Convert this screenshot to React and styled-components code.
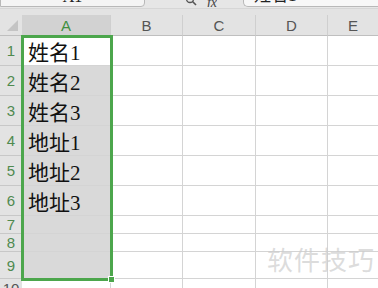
import styled, { createGlobalStyle } from 'styled-components';

const GlobalStyle = createGlobalStyle`
  html, body {
    margin: 0;
    padding: 0;
    background: #ffffff;
  }
`;

const columns = ['A', 'B', 'C', 'D', 'E'];
const colWidths = [89, 72, 73, 72, 50];

const rows = [
  { n: 1, h: 30, text: '姓名1' },
  { n: 2, h: 30, text: '姓名2' },
  { n: 3, h: 30, text: '姓名3' },
  { n: 4, h: 30, text: '地址1' },
  { n: 5, h: 30, text: '地址2' },
  { n: 6, h: 30, text: '地址3' },
  { n: 7, h: 18, text: '' },
  { n: 8, h: 18, text: '' },
  { n: 9, h: 27, text: '' },
  { n: 10, h: 30, text: '' },
];

const App = () => {
  return (
    <>
      <GlobalStyle />
      <Screen>
        <Toolbar>
          <NameBox>A1</NameBox>
          <Tools>
            <svg width="14" height="10" viewBox="0 0 14 10">
              <circle cx="5" cy="2" r="3.5" fill="none" stroke="#555" strokeWidth="1.3" />
              <line x1="7.5" y1="4.5" x2="11" y2="8" stroke="#555" strokeWidth="1.6" />
            </svg>
            <Fx>fx</Fx>
          </Tools>
          <FormulaBox>姓名1</FormulaBox>
        </Toolbar>
        <Spacer />
        <Sheet>
          <Grid>
            <Corner>
              <svg width="14" height="14" viewBox="0 0 14 14">
                <polygon points="13,2 13,13 2,13" fill="#c4c4c4" />
              </svg>
            </Corner>
            {columns.map((c, i) => (
              <ColHead key={c} $active={i === 0} $last={i === columns.length - 1}>
                {c}
              </ColHead>
            ))}
            {rows.map((r) => (
              <Row key={r.n} $h={r.h}>
                <RowHead $active={r.n < 10} $top={r.n === 10}>{r.n}</RowHead>
                {columns.map((c, i) => (
                  <Cell
                    key={c}
                    $selected={i === 0 && r.n > 1 && r.n < 10}
                    $last={i === columns.length - 1}
                  >
                    {i === 0 ? r.text : ''}
                  </Cell>
                ))}
              </Row>
            ))}
          </Grid>
          <Selection>
            <Handle />
          </Selection>
          <Watermark>软件技巧</Watermark>
        </Sheet>
      </Screen>
    </>
  );
};

const Screen = styled.div`
  width: 378px;
  height: 288px;
  overflow: hidden;
  display: flex;
  flex-direction: column;
  background: #ffffff;
  font-family: 'Liberation Sans', 'Noto Sans CJK SC', sans-serif;
`;

const Toolbar = styled.div`
  height: 8px;
  flex: none;
  background: #e6e6e6;
  display: flex;
  align-items: flex-end;
  overflow: hidden;
  border-bottom: 1px solid #d6d6d6;
`;

const NameBox = styled.div`
  width: 145px;
  height: 24px;
  flex: none;
  box-sizing: border-box;
  background: #f4f4f4;
  border: 1px solid #b8b8b8;
  border-radius: 0 0 4px 0;
  margin-bottom: 1px;
  display: flex;
  align-items: flex-end;
  justify-content: center;
  padding-bottom: 1px;
  font-family: 'Liberation Serif', serif;
  font-size: 16px;
  line-height: 16px;
  color: #222;
`;

const Tools = styled.div`
  width: 98px;
  flex: none;
  display: flex;
  justify-content: center;
  align-items: flex-end;
  gap: 8px;
  padding-bottom: 1px;
  padding-left: 14px;
  box-sizing: border-box;
`;

const Fx = styled.span`
  font-family: 'Liberation Serif', serif;
  font-style: italic;
  font-size: 14px;
  line-height: 8px;
  color: #444;
  height: 8px;
  overflow: hidden;
`;

const FormulaBox = styled.div`
  flex: 1;
  height: 24px;
  box-sizing: border-box;
  background: #f7f7f7;
  border: 1px solid #b8b8b8;
  border-right: none;
  border-radius: 0 0 0 5px;
  margin-bottom: 1px;
  padding: 0 0 2px 10px;
  display: flex;
  align-items: flex-end;
  font-family: 'Liberation Serif', 'Noto Sans CJK SC', serif;
  font-size: 17px;
  line-height: 17px;
  color: #222;
`;

const Spacer = styled.div`
  height: 6px;
  flex: none;
  background: #e3e3e3;
`;

const Sheet = styled.div`
  position: relative;
  flex: 1;
  overflow: hidden;
`;

const Grid = styled.div`
  display: grid;
  grid-template-columns: 22px ${colWidths.map((w) => `${w}px`).join(' ')};
  grid-auto-rows: auto;
`;

const Corner = styled.div`
  height: 21px;
  background: #e3e3e3;
  border-bottom: 1px solid #bfbfbf;
  box-sizing: border-box;
  display: flex;
  align-items: flex-end;
  justify-content: flex-end;
  padding: 0 3px 3px 0;
`;

const ColHead = styled.div`
  height: 21px;
  box-sizing: border-box;
  background: ${(p) => (p.$active ? '#d2d2d2' : '#e3e3e3')};
  border-bottom: 1px solid #bfbfbf;
  border-right: ${(p) => (p.$last ? 'none' : '1px solid #cfcfcf')};
  color: ${(p) => (p.$active ? '#3f8f3f' : '#555')};
  font-size: 15px;
  display: flex;
  align-items: center;
  justify-content: center;
  padding-top: 1px;
`;

const Row = styled.div`
  display: contents;
  & > div {
    height: ${(p) => p.$h}px;
  }
`;

const RowHead = styled.div`
  box-sizing: border-box;
  background: #e3e3e3;
  border-bottom: 1px solid #c8c8c8;
  color: ${(p) => (p.$active ? '#4f8a4f' : '#555')};
  font-size: 15px;
  display: flex;
  align-items: ${(p) => (p.$top ? 'flex-start' : 'center')};
  padding-top: ${(p) => (p.$top ? '1px' : '0')};
  justify-content: center;
`;

const Cell = styled.div`
  box-sizing: border-box;
  background: ${(p) => (p.$selected ? '#d9d9d9' : '#ffffff')};
  border-bottom: 1px solid #d4d4d4;
  border-right: ${(p) => (p.$last ? 'none' : '1px solid #d4d4d4')};
  font-family: 'Liberation Serif', 'Noto Sans CJK SC', serif;
  font-size: 21px;
  color: #111;
  display: flex;
  align-items: center;
  padding-left: 6px;
  white-space: nowrap;
`;

const Selection = styled.div`
  position: absolute;
  left: 21px;
  top: 20px;
  width: 92px;
  height: 246px;
  box-sizing: border-box;
  border: 3px solid #4ca64c;
  pointer-events: none;
`;

const Handle = styled.div`
  position: absolute;
  right: -5px;
  bottom: -5px;
  width: 5px;
  height: 5px;
  background: #4ca64c;
  border: 1px solid #ffffff;
`;

const Watermark = styled.div`
  position: absolute;
  right: 3px;
  bottom: 11px;
  font-family: 'Noto Sans CJK SC', sans-serif;
  font-size: 26px;
  letter-spacing: 1px;
  color: rgba(205, 205, 205, 0.7);
`;

export default App;
